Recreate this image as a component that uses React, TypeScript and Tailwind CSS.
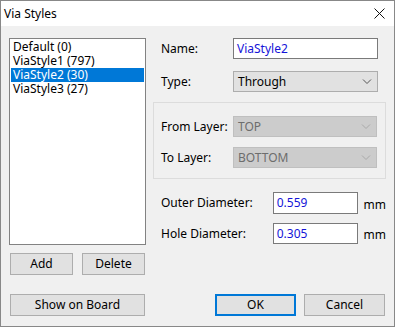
import React from "react";

const font = { fontFamily: '"Noto Sans", "Open Sans", sans-serif' };

function Chevron({ disabled }: { disabled?: boolean }) {
  return (
    <svg width="10" height="6" viewBox="0 0 10 6" className="shrink-0">
      <path d="M1 0.5 L5 4.5 L9 0.5" fill="none" stroke={disabled ? "#a8a8a8" : "#555555"} strokeWidth="1" />
    </svg>
  );
}

function Select({ value, disabled, w }: { value: string; disabled?: boolean; w: string }) {
  return (
    <div
      className={`${w} h-[21px] flex items-center justify-between pl-[4px] pr-[5px] border ${
        disabled ? "bg-[#cccccc] border-[#bfbfbf] text-[#6d6d6d]" : "bg-[#e1e1e1] border-[#adadad] text-black"
      }`}
    >
      <span className="leading-none">{value}</span>
      <Chevron disabled={disabled} />
    </div>
  );
}

function Input({ value, w, h }: { value: string; w: string; h: string }) {
  return (
    <div className={`${w} ${h} flex items-center pl-[3px] bg-white border border-[#7a7a7a] text-[#1414d8]`}>
      <span className="leading-none">{value}</span>
    </div>
  );
}

function Button({ children, w, primary }: { children: React.ReactNode; w: string; primary?: boolean }) {
  return (
    <div
      className={`${w} h-[22px] flex items-center justify-center bg-[#e1e1e1] text-black ${
        primary ? "border-2 border-[#0078d7]" : "border border-[#adadad]"
      }`}
    >
      <span className="leading-none">{children}</span>
    </div>
  );
}

export default function App() {
  const items = ["Default (0)", "ViaStyle1 (797)", "ViaStyle2 (30)", "ViaStyle3 (27)"];
  return (
    <div className="w-[395px] h-[327px] border border-[#888888] bg-[#f0f0f0] flex flex-col text-[12px] text-black" style={font}>
      <div className="h-[25px] bg-white flex items-center justify-between pl-[3px] pr-[9px] shrink-0">
        <span className="leading-none">Via Styles</span>
        <svg width="11" height="11" viewBox="0 0 11 11">
          <path d="M0.5 0.5 L10.5 10.5 M10.5 0.5 L0.5 10.5" stroke="#111" strokeWidth="1" />
        </svg>
      </div>
      <div className="flex flex-row">
        {/* left column */}
        <div className="flex flex-col pl-[8px] pt-[12px] w-[152px] shrink-0">
          <div className="w-[137px] h-[207px] bg-white border border-[#828282] pt-[1px] px-[1px]">
            {items.map((it, i) => (
              <div
                key={it}
                className={`h-[14px] pl-[2px] leading-[14px] ${i === 2 ? "bg-[#0078d7] text-white" : ""}`}
              >
                {it}
              </div>
            ))}
          </div>
          <div className="flex flex-row gap-[9px] mt-[8px] ml-[1px]">
            <Button w="w-[63px]">Add</Button>
            <Button w="w-[63px]">Delete</Button>
          </div>
          <div className="mt-[19px] ml-[1px]">
            <Button w="w-[135px]">Show on Board</Button>
          </div>
        </div>
        {/* right column */}
        <div className="flex flex-col w-[233px] pt-[12px]">
          <div className="flex flex-row items-center pl-[8px]">
            <span className="w-[72px] leading-none">Name:</span>
            <Input value="ViaStyle2" w="w-[145px]" h="h-[21px]" />
          </div>
          <div className="flex flex-row items-center pl-[8px] mt-[12px]">
            <span className="w-[72px] leading-none">Type:</span>
            <Select value="Through" w="w-[145px]" />
          </div>
          <div className="mt-[10px] h-[77px] border border-[#dcdcdc] pl-[7px] pt-[13px] flex flex-col">
            <div className="flex flex-row items-center">
              <span className="w-[72px] leading-none">From Layer:</span>
              <Select value="TOP" disabled w="w-[144px]" />
            </div>
            <div className="flex flex-row items-center mt-[10px]">
              <span className="w-[72px] leading-none">To Layer:</span>
              <Select value="BOTTOM" disabled w="w-[144px]" />
            </div>
          </div>
          <div className="flex flex-row items-center pl-[8px] mt-[13px]">
            <span className="w-[112px] leading-none">Outer Diameter:</span>
            <Input value="0.559" w="w-[85px]" h="h-[22px]" />
            <span className="ml-[6px] leading-none mt-[3px]">mm</span>
          </div>
          <div className="flex flex-row items-center pl-[8px] mt-[9px]">
            <span className="w-[112px] leading-none">Hole Diameter:</span>
            <Input value="0.305" w="w-[85px]" h="h-[21px]" />
            <span className="ml-[6px] leading-none mt-[3px]">mm</span>
          </div>
          <div className="flex flex-row gap-[8px] pl-[62px] mt-[50px]">
            <Button w="w-[81px]" primary>OK</Button>
            <Button w="w-[81px]">Cancel</Button>
          </div>
        </div>
      </div>
    </div>
  );
}
